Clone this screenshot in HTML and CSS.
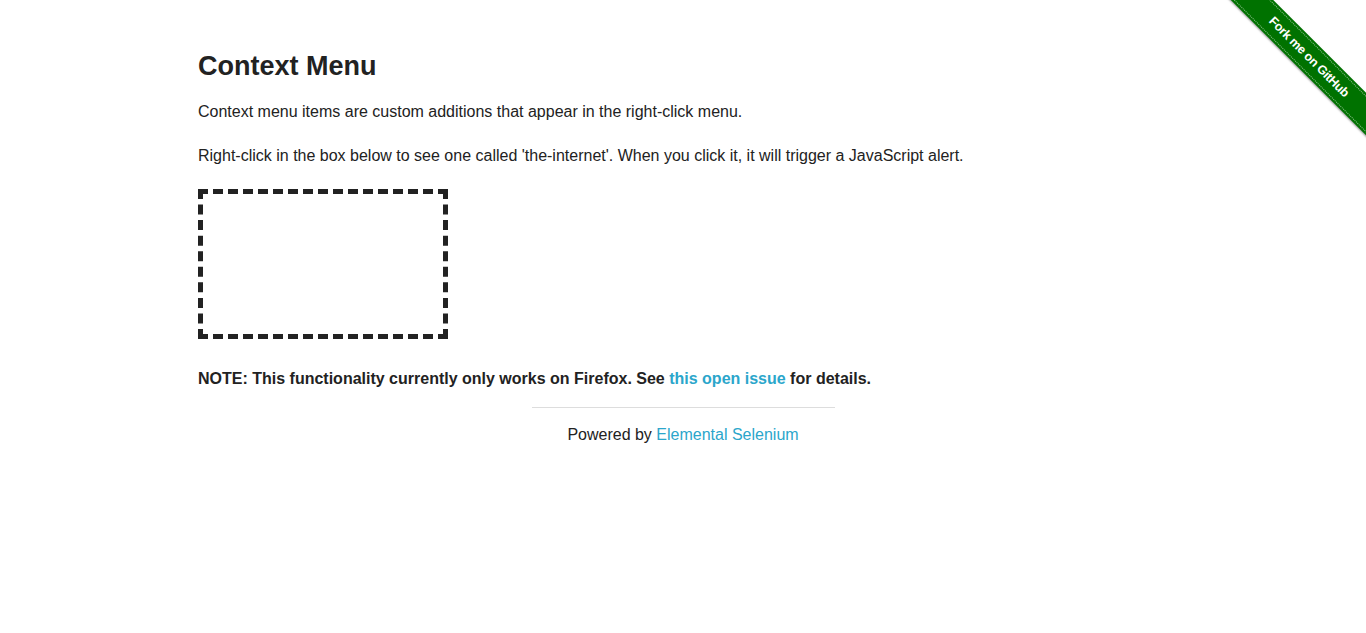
FILE: index.html
```html
<!DOCTYPE html>
<html lang="en">
<head>
<meta charset="utf-8">
<title>The Internet</title>
<link rel="stylesheet" href="styles.css">
</head>
<body>
<a class="ribbon" href="#"><span class="ribbon-band"><span class="ribbon-text">Fork me on GitHub</span></span></a>
<div class="row">
  <div class="content">
    <h3 class="title">Context Menu</h3>
    <p class="para intro">Context menu items are custom additions that appear in the right-click menu.</p>
    <p class="para">Right-click in the box below to see one called 'the-internet'. When you click it, it will trigger a JavaScript alert.</p>
    <div class="hot-spot"></div>
    <p class="para note"><b>NOTE: This functionality currently only works on Firefox. See <a class="link" href="#">this open issue</a> for details.</b></p>
  </div>
</div>
<div class="footer">
  <hr class="rule">
  <div class="powered">Powered by <a class="link" href="#">Elemental Selenium</a></div>
</div>
</body>
</html>
```
FILE: styles.css
```css
* { box-sizing: border-box; }
html, body { margin: 0; padding: 0; background: #fff; }
body {
  font-family: "Liberation Sans", Arial, Helvetica, sans-serif;
  font-size: 16px;
  color: #222;
  position: relative;
  min-height: 633px;
}
.row {
  width: 1000px;
  margin: 0 auto;
  padding: 0 15px;
}
.content { padding-top: 50px; }
.title {
  font-size: 27px;
  line-height: 1.2;
  font-weight: bold;
  margin: 0 0 17px;
  color: #222;
}
.para {
  margin: 0 0 20px;
  line-height: 1.6;
}
.intro { margin-bottom: 18px; }
.hot-spot {
  width: 250px;
  height: 150px;
  border: 5px dashed #222;
}
.note { margin: 27px 0 0; }
.link { color: #2ba6cb; text-decoration: none; }
.footer {
  width: 303px;
  margin: 0 auto;
}
.rule {
  border: 0;
  border-top: 1px solid #ddd;
  margin: 16px 0 14px;
  height: 0;
}
.powered { text-align: center; line-height: 1.6; }
.ribbon {
  position: absolute;
  top: 0;
  right: 0;
  width: 149px;
  height: 149px;
  overflow: hidden;
  text-decoration: none;
}
.ribbon-band {
  position: absolute;
  left: -18px;
  top: 42px;
  width: 220px;
  height: 30px;
  background: #007200;
  transform: rotate(45deg);
  padding: 2px 0;
  display: block;
  box-shadow: 0 1px 2px rgba(0,0,0,0.4);
}
.ribbon-text {
  display: block;
  height: 26px;
  border-top: 1px dotted rgba(255,255,255,0.55);
  border-bottom: 1px dotted rgba(255,255,255,0.55);
  color: #fff;
  font-family: "Liberation Sans", Arial, sans-serif;
  font-weight: bold;
  font-size: 12.5px;
  line-height: 24px;
  text-align: center;
  letter-spacing: -0.3px;
}
```
